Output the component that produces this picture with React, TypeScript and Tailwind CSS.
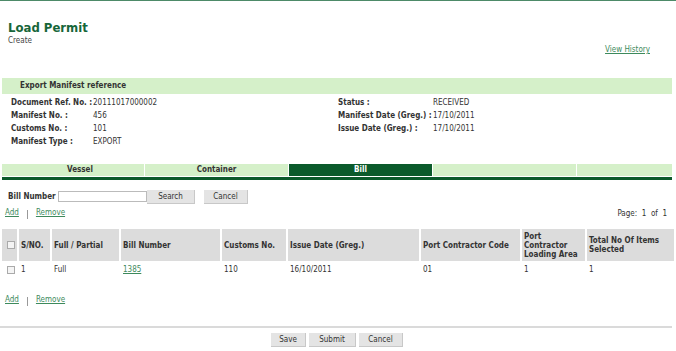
import React from "react";

const font = { fontFamily: '"DejaVu Sans", Verdana, sans-serif' };

const Field = ({ label, value, w }: { label: string; value: string; w: string }) => (
  <div className="flex h-[13px] items-center whitespace-nowrap">
    <span className={`font-bold text-[#333] ${w}`}>{label}</span>
    <span className="text-[#333]">{value}</span>
  </div>
);

const Btn = ({ children, w }: { children: React.ReactNode; w: string }) => (
  <button className={`h-[14px] ${w} bg-[#e4e4e4] text-[#333] text-[8px] leading-[14px] border-b border-r border-[#c8c8c8]`}>
    {children}
  </button>
);

const AddRemove = () => (
  <div className="flex items-center text-[8px] pl-[5px]">
    <a className="text-[#3d8a5c] underline">Add</a>
    <span className="mx-[8px] h-[9px] w-px bg-[#999] mt-[3px]" />
    <a className="text-[#3d8a5c] underline">Remove</a>
  </div>
);

const cols = [
  { w: "w-[15px]", h: "" },
  { w: "w-[31px]", h: "S/NO." },
  { w: "w-[67px]", h: "Full / Partial" },
  { w: "w-[99px]", h: "Bill Number" },
  { w: "w-[64px]", h: "Customs No." },
  { w: "w-[131px]", h: "Issue Date (Greg.)" },
  { w: "w-[99px]", h: "Port Contractor Code" },
  { w: "w-[63px]", h: "Port Contractor Loading Area" },
  { w: "flex-1", h: "Total No Of Items Selected" },
];

const row = ["", "1", "Full", "1385", "110", "16/10/2011", "01", "1", "1"];

export default function App() {
  return (
    <div className="w-[676px] h-[351px] bg-white overflow-hidden text-[8px] text-[#333] font-stretch-semi-condensed" style={font}>
      <div className="h-px bg-[#4d8a68]" />
      <div className="pl-[8px] pt-[19px]">
        <div className="text-[13px] font-bold text-[#17663a] leading-[16px]">Load Permit</div>
        <div className="text-[8px] leading-[9px] text-[#444]">Create</div>
      </div>
      <div className="flex justify-end pr-[26px] -mt-[1px]">
        <a className="underline text-[#3d8a5c]">View History</a>
      </div>
      <div className="ml-[2px] mr-[4px] mt-[22px] h-[16px] bg-[#d5f0c9] pl-[18px] flex items-center font-bold text-[#333]">
        Export Manifest reference
      </div>
      <div className="flex pl-[11px] pt-[2px]">
        <div className="w-[327px] flex flex-col">
          <Field label="Document Ref. No. :" value="20111017000002" w="w-[82px]" />
          <Field label="Manifest No. :" value="456" w="w-[82px]" />
          <Field label="Customs No. :" value="101" w="w-[82px]" />
          <Field label="Manifest Type :" value="EXPORT" w="w-[82px]" />
        </div>
        <div className="flex flex-col">
          <Field label="Status :" value="RECEIVED" w="w-[95px]" />
          <Field label="Manifest Date (Greg.) :" value="17/10/2011" w="w-[95px]" />
          <Field label="Issue Date (Greg.) :" value="17/10/2011" w="w-[95px]" />
        </div>
      </div>
      <div className="ml-[2px] mr-[4px] mt-[16px]">
        <div className="flex h-[12px] font-bold text-[8px] leading-[12px] gap-px">
          <div className="w-[142px] bg-[#d5f0c9] text-center pl-[14px]">Vessel</div>
          <div className="w-[143px] bg-[#d5f0c9] text-center">Container</div>
          <div className="w-[143px] bg-[#0b5a2b] text-white text-center">Bill</div>
          <div className="w-[143px] bg-[#d5f0c9]" />
          <div className="flex-1 bg-[#d5f0c9]" />
        </div>
        <div className="h-[3px] bg-[#0b5a2b] mt-px" />
      </div>
      <div className="flex items-center pl-[8px] mt-[9px] h-[15px] whitespace-nowrap">
        <span className="font-bold w-[50px]">Bill Number</span>
        <div className="w-[89px] h-[11px] border border-[#bbb] bg-white" />
        <Btn w="w-[48px]">Search</Btn>
        <span className="w-[9px]" />
        <Btn w="w-[44px]">Cancel</Btn>
      </div>
      <div className="flex justify-between items-center mt-[1px] pr-[9px]">
        <AddRemove />
        <span className="mt-[3px]">Page:&nbsp; 1 &nbsp;of &nbsp;1</span>
      </div>
      <div className="ml-[2px] mr-[2px] mt-[9px]">
        <div className="flex h-[32px] bg-white gap-[2px]">
          {cols.map((c, i) => (
            <div key={i} className={`${c.w} bg-[#dcdcdc] flex items-center font-bold text-[8px] leading-[9px] pl-[2px] ${i === 0 ? "justify-center" : ""}`}>
              {i === 0 ? <div className="w-[8px] h-[8px] border border-[#aaa] bg-[#f4f4f4]" /> : c.h}
            </div>
          ))}
        </div>
        <div className="flex h-[18px] gap-[2px] items-center">
          {cols.map((c, i) => (
            <div key={i} className={`${c.w} flex items-center pl-[2px] ${i === 0 ? "justify-center" : ""}`}>
              {i === 0 ? (
                <div className="w-[8px] h-[8px] border border-[#aaa] bg-[#f4f4f4]" />
              ) : i === 3 ? (
                <a className="underline text-[#3d8a5c]">{row[i]}</a>
              ) : (
                row[i]
              )}
            </div>
          ))}
        </div>
      </div>
      <div className="mt-[15px]">
        <AddRemove />
      </div>
      <div className="h-[2px] bg-[#dadada] mt-[20px] mr-[4px]" />
      <div className="flex justify-center gap-[3px] mt-[5px] pr-[2px]">
        <Btn w="w-[35px]">Save</Btn>
        <Btn w="w-[47px]">Submit</Btn>
        <Btn w="w-[44px]">Cancel</Btn>
      </div>
    </div>
  );
}
